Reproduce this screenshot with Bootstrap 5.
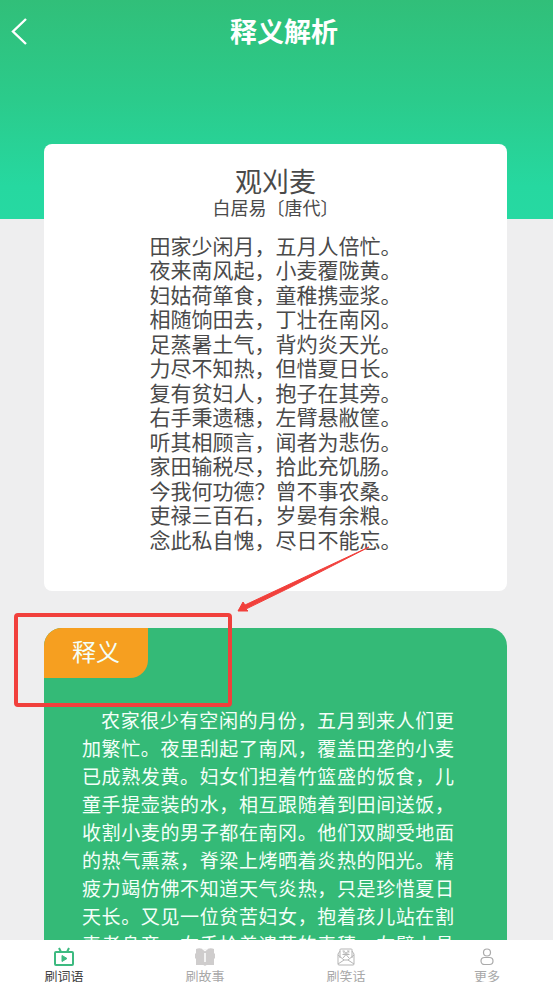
<!DOCTYPE html>
<html lang="zh-CN">
<head>
<meta charset="utf-8">
<meta name="viewport" content="width=device-width, initial-scale=1">
<title>释义解析</title>
<link href="https://cdn.jsdelivr.net/npm/bootstrap@5.3.0/dist/css/bootstrap.min.css" rel="stylesheet">
<style>
  body { font-family: "Noto Sans CJK SC", sans-serif; background: #eeeeef; color: #4a4a4a; }
  .scroll-area { min-height: 0; scrollbar-width: none; }
  .scroll-area::-webkit-scrollbar { display: none; }
  .page-top { background: linear-gradient(#31bf79, #2bcb8b 45%, #26d8a0 85%, #26d9a2) top / 100% 219px no-repeat; }
  .page-head { padding: 12px 12px 12px 0; }
  .back-btn { width: 27px; padding: 0 0 0 11px; line-height: 1; }
  .page-title { font-size: 27px; line-height: 38px; }
  .page-body { padding: 82px 46px 40px 44px; gap: 37px; }
  .poem { border-radius: 8px; padding: 21px 16px 40px; }
  .poem-title { font-size: 27px; line-height: 32px; }
  .poem-author { font-size: 18px; line-height: 20px; margin-bottom: 16px; }
  .verses { font-size: 21px; line-height: 24px; gap: 1px; }
  .meaning { background: #34ba77; border-radius: 18px; color: #f4fff9; }
  .meaning-tag { background: #f69f20; border-radius: 18px 0 18px 0; font-size: 24px; line-height: 34px; padding: 6px 28px 10px; }
  .meaning-text { font-size: 19px; line-height: 28px; padding: 28px 53px 37px 38px; text-align: justify; text-indent: 1em; }
  .callout-mark { left: -30px; top: -88px; pointer-events: none; }
  .tabs { padding: 7px 47px 0 45px; height: 42px; }
  .tab-item { width: 38px; font-size: 13px; line-height: 16px; color: #a9a9a9; white-space: nowrap; }
  .tab-item.current { color: #444; }
  .tab-item svg { margin-bottom: 1px; }
</style>
<script src="https://cdn.jsdelivr.net/npm/bootstrap@5.3.0/dist/js/bootstrap.bundle.min.js"></script>
</head>
<body class="vh-100 d-flex flex-column overflow-hidden">
<main class="scroll-area flex-grow-1 overflow-auto">
  <div class="page-top">
    <header class="page-head d-flex align-items-center">
      <button type="button" class="back-btn border-0 bg-transparent" aria-label="返回">
        <svg class="d-block" width="16" height="28" viewBox="0 0 16 28" fill="none" stroke="#fff" stroke-width="2.400"><path d="M15 2 2 14.500 15 27"/></svg>
      </button>
      <h1 class="page-title flex-grow-1 text-center text-white fw-bold m-0">释义解析</h1>
    </header>
    <div class="page-body d-flex flex-column">
      <article class="poem bg-white text-center">
        <h2 class="poem-title fw-normal m-0">观刈麦</h2>
        <p class="poem-author">白居易〔唐代〕</p>
        <div class="verses d-flex flex-column">
          <p class="m-0">田家少闲月，五月人倍忙。<br>夜来南风起，小麦覆陇黄。</p>
          <p class="m-0">妇姑荷箪食，童稚携壶浆。<br>相随饷田去，丁壮在南冈。</p>
          <p class="m-0">足蒸暑土气，背灼炎天光。<br>力尽不知热，但惜夏日长。</p>
          <p class="m-0">复有贫妇人，抱子在其旁。<br>右手秉遗穗，左臂悬敝筐。</p>
          <p class="m-0">听其相顾言，闻者为悲伤。<br>家田输税尽，拾此充饥肠。</p>
          <p class="m-0">今我何功德？曾不事农桑。<br>吏禄三百石，岁晏有余粮。</p>
          <p class="m-0">念此私自愧，尽日不能忘。</p>
        </div>
      </article>
      <section class="meaning position-relative">
        <h2 class="meaning-tag d-inline-block fw-normal m-0 align-top">释义</h2>
        <p class="meaning-text mb-0">农家很少有空闲的月份，五月到来人们更加繁忙。夜里刮起了南风，覆盖田垄的小麦已成熟发黄。妇女们担着竹篮盛的饭食，儿童手提壶装的水，相互跟随着到田间送饭，收割小麦的男子都在南冈。他们双脚受地面的热气熏蒸，脊梁上烤晒着炎热的阳光。精疲力竭仿佛不知道天气炎热，只是珍惜夏日天长。又见一位贫苦妇女，抱着孩儿站在割麦者身旁，右手拾着遗落的麦穗，左臂上悬挂着一个破筐。</p>
        <svg class="callout-mark position-absolute" width="362" height="168" viewBox="0 0 362 168" aria-hidden="true">
          <rect x="2" y="75" width="214" height="90" rx="2" fill="none" stroke="#f1403c" stroke-width="4"/>
          <path d="M355 7 231 65 229 62 224 71 234 71 232 69 275 48Z" fill="#f1403c" stroke="#f1403c" stroke-width="1" stroke-linejoin="round"/>
        </svg>
      </section>
    </div>
  </div>
</main>
<nav class="tabs bg-white d-flex justify-content-between flex-shrink-0" aria-label="主导航">
  <a href="#words" class="tab-item current d-flex flex-column align-items-center text-decoration-none" aria-current="page">
    <svg class="flex-shrink-0" width="20" height="20" viewBox="0 0 20 20" fill="none" stroke="#3dba80" stroke-width="2"><rect x="1" y="5" width="18" height="13" rx="1"/><path d="M5 1l2 4M15 1l-2 4"/><path d="M8 8.500v6l5-3z" fill="#3dba80" stroke-width="1"/></svg>
    <span>刷词语</span>
  </a>
  <a href="#stories" class="tab-item d-flex flex-column align-items-center text-decoration-none">
    <svg class="flex-shrink-0" width="20" height="20" viewBox="0 0 20 20"><path d="M1 2Q5 0 10 3Q15 0 19 2V6L20 7V11L19 12V18H12Q11 18 10 19Q9 18 8 18H1V12L0 11V7L1 6Z" fill="#cfcdcd"/><path d="M10 6v9" stroke="#fff" stroke-width="1.500"/><path d="M7 1.500 10 4l3-2.500" fill="none" stroke="#fff" stroke-width="1"/></svg>
    <span>刷故事</span>
  </a>
  <a href="#jokes" class="tab-item d-flex flex-column align-items-center text-decoration-none">
    <svg class="flex-shrink-0" width="20" height="20" viewBox="0 0 20 20" fill="none" stroke="#b5b5b5" stroke-width="1"><path d="M4 4 2 7v10q0 1 1 1h14q1 0 1-1V7l-2-3M4 11V2.500Q4 2 5 2h10q1 0 1 .5V11M2 8l6 5h4l6-5M2 17l6-4M18 17l-6-4"/><path d="M6.500 4h2l-1 1.500M11 4h2.500M12 4l1 1.500M10 5v2M6.500 7.500h7M10 7.500 7 11M10 7.500l3 3.500M7.500 6h5"/></svg>
    <span>刷笑话</span>
  </a>
  <a href="#more" class="tab-item d-flex flex-column align-items-center text-decoration-none">
    <svg class="flex-shrink-0" width="20" height="20" viewBox="0 0 20 20" fill="none" stroke="#aaa" stroke-width="1.200"><circle cx="10" cy="5.500" r="3.500"/><rect x="4" y="10.500" width="12" height="7" rx="3.500"/></svg>
    <span>更多</span>
  </a>
</nav>
</body>
</html>
